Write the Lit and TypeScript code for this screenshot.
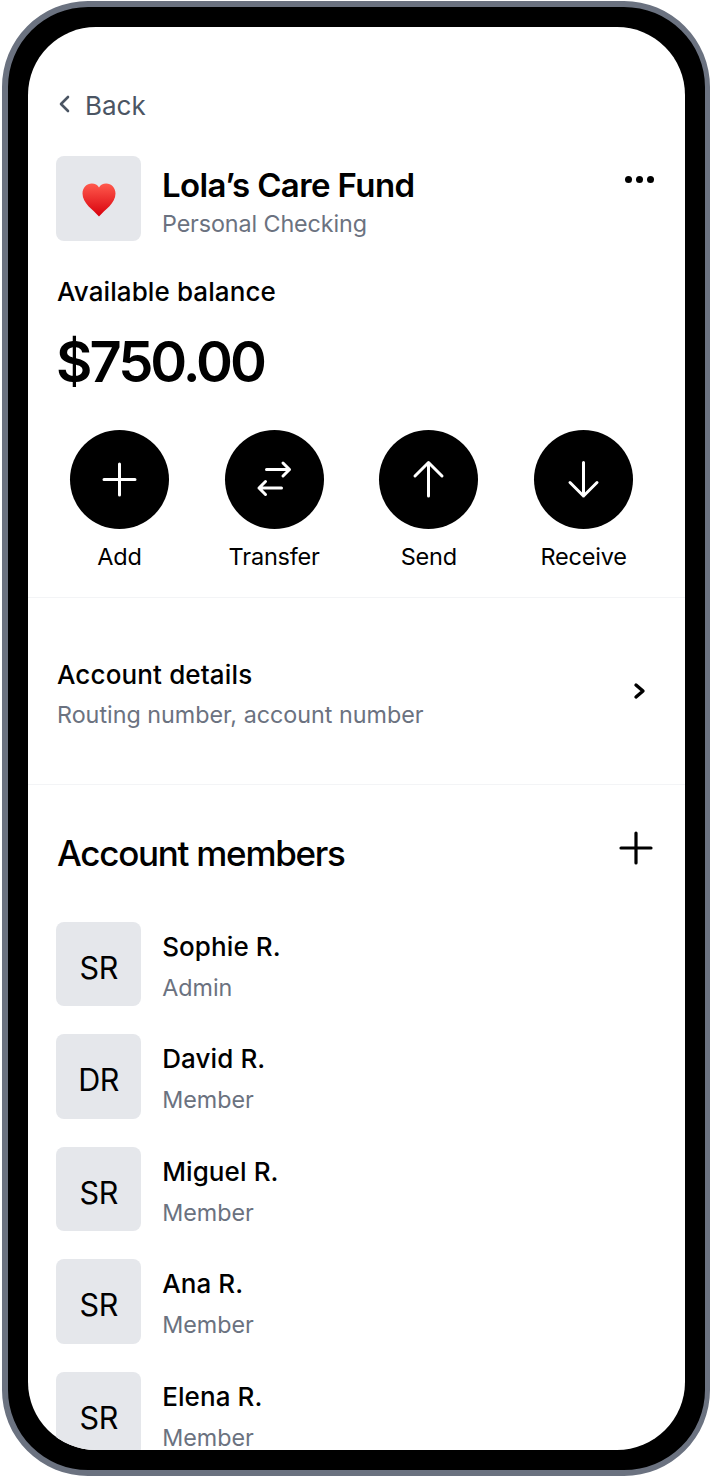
import { LitElement, html, css, svg } from "lit";
import { customElement } from "lit/decorators.js";

const members = [
  { i: "SR", n: "Sophie R.", r: "Admin" },
  { i: "DR", n: "David R.", r: "Member" },
  { i: "SR", n: "Miguel R.", r: "Member" },
  { i: "SR", n: "Ana R.", r: "Member" },
  { i: "SR", n: "Elena R.", r: "Member" },
];

const actions = [
  { l: "Add", p: svg`<path d="M24.500 9v31M9 24.500h31"/>` },
  { l: "Transfer", p: svg`<path d="M16.500 14.500H39.500M33 8l6.500 6.500L33 21M31.500 33H9M15.500 26.500 9 33l6.500 6.500"/>` },
  { l: "Send", p: svg`<path d="M24.500 41V7.500M11 21 24.500 7.500 38 21"/>` },
  { l: "Receive", p: svg`<path d="M24.500 7.500V41M11 27.500 24.500 41 38 27.500"/>` },
];

@customElement("app-root")
export class AppRoot extends LitElement {
  static styles = css`
    :host { display: block; width: 711px; height: 1477px; overflow: hidden; background: #fff; font-family: Inter, "Liberation Sans", sans-serif; color: #000; }
    .frame { box-sizing: border-box; width: 708px; height: 1475px; margin: 1px 1px 0 2px; border: 6px solid #6b7280; border-right-width: 5px; border-radius: 86px; background: #000; padding: 20px; }
    .screen { width: 100%; height: 100%; background: #fff; border-radius: 68px; overflow: hidden; }
    .back { display: flex; align-items: center; gap: 12px; margin: 63px 0 0 29px; height: 32px; font-size: 26px; line-height: 32px; color: #4b5563; }
    .back svg { width: 16px; height: 20px; fill: none; stroke: #4b5563; stroke-width: 2.6; stroke-linecap: round; stroke-linejoin: round; margin-top: -4px; }
    .head { display: flex; margin: 34.400px 0 0 28.400px; position: relative; }
    .tile { width: 84.600px; height: 84.400px; border-radius: 8px; background: #e5e7eb; display: flex; align-items: center; justify-content: center; flex: none; }
    .head .text { margin-left: 21px; padding-top: 7.600px; }
    .title { font-size: 33px; line-height: 42px; font-weight: 600; letter-spacing: -0.6px; }
    .sub { font-size: 23.300px; line-height: 32px; color: #6b7280; }
    .head .sub { margin-top: 2px; letter-spacing: -0.1px; }
    .dots { position: absolute; right: 31.500px; top: 19.600px; display: flex; gap: 4px; }
    .dots i { width: 7px; height: 7px; border-radius: 50%; background: #000; }
    .label { margin: 33.200px 0 0 29px; font-size: 26px; line-height: 36px; font-weight: 500; letter-spacing: 0.1px; }
    .amount { margin: 18px 0 0 28px; font-size: 56px; line-height: 68px; font-weight: 600; letter-spacing: -3px; }
    .actions { display: grid; grid-template-columns: repeat(4, 154.700px); margin: 34px 0 0 28.500px; }
    .action { display: flex; flex-direction: column; align-items: center; width: 126px; }
    .circle { width: 99px; height: 99px; border-radius: 50%; background: #000; display: flex; align-items: center; justify-content: center; }
    .circle svg { width: 49px; height: 48px; fill: none; stroke: #fff; stroke-width: 3; stroke-linecap: round; stroke-linejoin: round; }
    .action span { margin-top: 13px; font-size: 23.500px; line-height: 30px; letter-spacing: -0.2px; }
    .details { box-sizing: border-box; display: flex; align-items: center; justify-content: space-between; margin-top: 25px; height: 188px; border-top: 1px solid #f3f4f6; border-bottom: 1px solid #f3f4f6; padding: 8px 38px 0 29px; }
    .details .name { font-size: 26px; line-height: 34px; font-weight: 500; letter-spacing: 0.14px; }
    .details .sub { margin-top: 7px; }
    .details svg { width: 14px; height: 20px; fill: none; stroke: #000; stroke-width: 3.400; stroke-linecap: round; stroke-linejoin: round; margin-top: -8px; }
    .members-head { display: flex; align-items: center; justify-content: space-between; margin: 46px 32px 0 29px; height: 44px; }
    .members-head h2 { margin: 0; font-size: 35px; line-height: 44px; font-weight: 500; letter-spacing: -1.27px; }
    .members-head svg { width: 34px; height: 34px; fill: none; stroke: #000; stroke-width: 3.200; stroke-linecap: round; margin-top: -9px; }
    .list { display: flex; flex-direction: column; gap: 28.100px; margin: 47px 0 0 28.400px; }
    .row { display: flex; }
    .row .tile { font-size: 30.500px; letter-spacing: -0.3px; padding-top: 6px; box-sizing: border-box; }
    .row .text { margin-left: 21.200px; }
    .row .name { font-size: 26px; line-height: 34px; font-weight: 500; letter-spacing: 0.1px; margin-top: 7.600px; }
    .row .sub { margin-top: 8px; }
  `;

  render() {
    return html`<div class="frame"><div class="screen">
      <div class="back"><svg viewBox="0 0 16 20"><path d="M11 3 4 10l7 7"/></svg>Back</div>
      <div class="head">
        <div class="tile">
          <svg width="34" height="34" viewBox="0 0 34 34" aria-hidden="true" style="margin-top:2px">
            <defs><linearGradient id="h" x1="0" y1="0" x2="0" y2="1"><stop offset="0" stop-color="#ff5a4d"/><stop offset="1" stop-color="#d8000c"/></linearGradient></defs>
            <path fill="url(#h)" d="M17 33.500C11 26.500 .5 20.500 .5 10.500 .5 4.500 4.800 .5 9.800 .5 13 .5 15.700 1.800 17 4.500 18.300 1.800 21 .5 24.200 .5 29.200 .5 33.500 4.500 33.500 10.500 33.500 20.500 23 26.500 17 33.500Z"/>
          </svg>
        </div>
        <div class="text"><div class="title">Lola’s Care Fund</div><div class="sub">Personal Checking</div></div>
        <div class="dots"><i></i><i></i><i></i></div>
      </div>
      <div class="label">Available balance</div>
      <div class="amount">$750.00</div>
      <div class="actions">
        ${actions.map((a) => html`<div class="action"><div class="circle"><svg viewBox="0 0 49 48">${a.p}</svg></div><span>${a.l}</span></div>`)}
      </div>
      <div class="details">
        <div><div class="name">Account details</div><div class="sub">Routing number, account number</div></div>
        <svg viewBox="0 0 14 20"><path d="M3 4l7 6-7 6"/></svg>
      </div>
      <div class="members-head"><h2>Account members</h2><svg viewBox="0 0 34 34"><path d="M17 2v30M2 17h30"/></svg></div>
      <div class="list">
        ${members.map((m) => html`<div class="row"><div class="tile">${m.i}</div><div class="text"><div class="name">${m.n}</div><div class="sub">${m.r}</div></div></div>`)}
      </div>
    </div></div>`;
  }
}
